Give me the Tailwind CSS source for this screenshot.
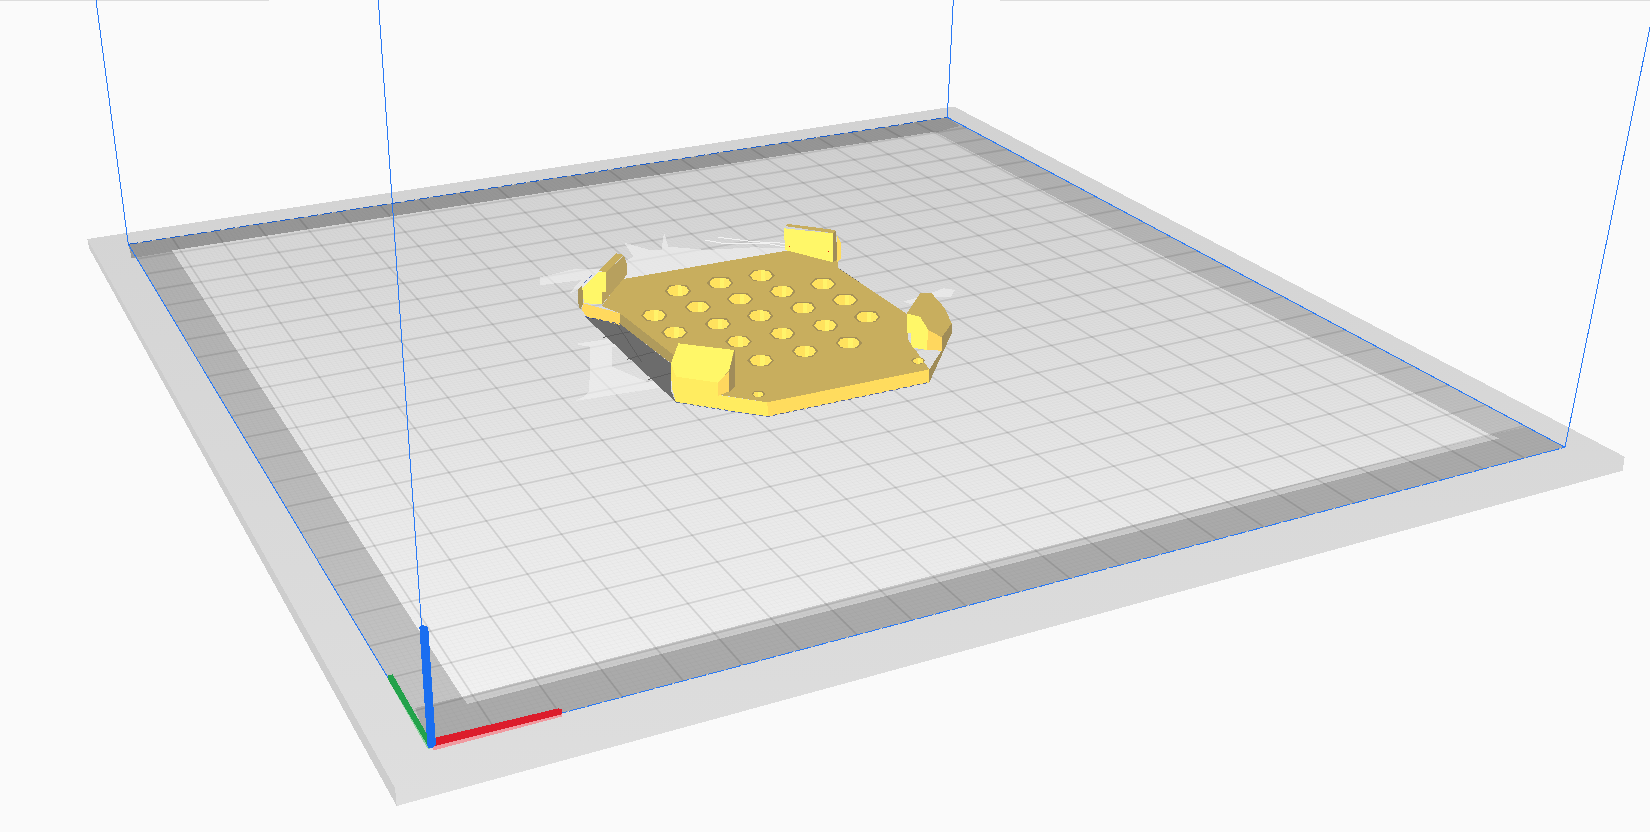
<!DOCTYPE html>
<html lang="en">
<head>
<meta charset="utf-8">
<title>3D build plate view</title>
<script src="https://cdn.jsdelivr.net/npm/@tailwindcss/browser@4"></script>
</head>
<body class="bg-[#fafafa]">
<div class="w-[1650px] h-[832px] overflow-hidden bg-[#fafafa]">
<svg class="block w-[1650px] h-[832px]" viewBox="0 0 1650 832" xmlns="http://www.w3.org/2000/svg">
  <defs>
    <linearGradient id="plat" gradientUnits="userSpaceOnUse" x1="0" y1="107" x2="0" y2="800">
      <stop offset="0" stop-color="#d2d2d2"/><stop offset="1" stop-color="#dedede"/>
    </linearGradient>
    <linearGradient id="light" gradientUnits="userSpaceOnUse" x1="0" y1="130" x2="0" y2="700">
      <stop offset="0" stop-color="#d2d2d2"/><stop offset=".3" stop-color="#dcdcdc"/><stop offset=".65" stop-color="#e9e9e9"/><stop offset="1" stop-color="#f1f1f1"/>
    </linearGradient>
    <linearGradient id="leftband" gradientUnits="userSpaceOnUse" x1="0" y1="250" x2="0" y2="710">
      <stop offset="0" stop-color="#b0b0b0"/><stop offset="1" stop-color="#c4c4c4"/>
    </linearGradient>
    <linearGradient id="rightband" gradientUnits="userSpaceOnUse" x1="0" y1="125" x2="0" y2="430">
      <stop offset="0" stop-color="#b0b0b0"/><stop offset="1" stop-color="#c0c0c0"/>
    </linearGradient>
    <linearGradient id="holefill">
      <stop offset="0" stop-color="#ffe25e"/><stop offset=".48" stop-color="#ffe25e"/>
      <stop offset=".48" stop-color="#fff36a"/><stop offset=".68" stop-color="#fff36a"/>
      <stop offset=".68" stop-color="#ffe964"/><stop offset="1" stop-color="#ffe964"/>
    </linearGradient>
    <g id="hole">
      <polygon points="-40,1 -25,-16 25,-16 40,1 25,17 -25,17" fill="#a69158"/>
      <polygon points="-33,1 -24,-11 -8,-15 8,-15 24,-11 33,1 24,13 8,17 -8,17 -24,13" fill="url(#holefill)"/>
    </g>
    <g id="smallhole">
      <polygon points="-21,0 -12,-9 12,-9 21,0 12,9 -12,9" fill="#a69158"/>
      <ellipse cx="0" cy="1" rx="15" ry="8" fill="url(#holefill)"/>
    </g>
  </defs>

  <!-- top edge -->
  <rect x="0" y="0" width="269" height="1" fill="#dddddd"/>
  <rect x="1000" y="0" width="650" height="1" fill="#dddddd"/>

  <!-- platform -->
  <g shape-rendering="crispEdges">
    <polygon points="87.3,239 947,107.5 955,107 1624.7,456.7 1622.7,470.7 396.7,806 395,788" fill="url(#plat)"/>
    <polygon points="87.3,239 395,788 396.7,806 89,248" fill="#cdcdcd"/>

    <!-- disallowed bands -->
    <polygon points="128.3,244.3 430,748 470,700 172,250" fill="url(#leftband)"/>
    <polygon points="947.3,117.3 1565,447.3 1490,440 935,131.7" fill="url(#rightband)"/>
    <polygon points="128.3,244.3 947.3,117.3 960,126 935,132.5 172,251.5 131.7,258.3" fill="#989898"/>
    <polygon points="415,708 462,696.7 980,563.3 1490.7,435 1526.4,426.7 1565,447.3 430,748" fill="#aaaaaa"/>
    <polygon points="172,250.5 935,131.7 1490.7,435 462,696.7" fill="url(#light)"/>
    <polygon points="462,696.7 980,563.3 1490.7,435 1499.6,438.3 980,571.7 467.5,704" fill="#cbcbcb"/>
  </g>

  <!-- grid, filled by the script below -->
  <g id="grid"></g>

  <!-- build volume outline -->
  <g fill="none" stroke="#2a7af5" stroke-width="1" shape-rendering="crispEdges">
    <line x1="96" y1="0" x2="128.3" y2="244.3"/>
    <line x1="378.3" y1="0" x2="430" y2="748"/>
    <line x1="953.3" y1="0" x2="947.3" y2="117.3"/>
    <line x1="1650" y1="27" x2="1565" y2="447.3"/>
    <line x1="128.3" y1="244.3" x2="430" y2="748"/>
    <line x1="947.3" y1="117.3" x2="1565" y2="447.3"/>
    <line x1="430" y1="748" x2="1565" y2="447.3" stroke-dasharray="16 2"/>
    <line x1="128.3" y1="244.3" x2="947.3" y2="117.3" stroke="#1f5fc8" stroke-dasharray="10 4"/>
  </g>

  <!-- model, in 3x crop coordinates -->
  <g transform="translate(540 200) scale(.33333)" shape-rendering="crispEdges">
    <!-- pale marks on the plate -->
    <g fill="#f2f2f2" fill-opacity=".6">
      <polygon points="0,232 100,208 210,205 280,170 252,128 330,150 365,150 372,96 385,140 500,150 640,142 740,145 740,160 250,240 130,262 85,282 125,240 0,256"/>
      <polygon points="115,430 200,418 290,420 250,440 215,440 215,500 320,545 395,540 395,558 250,580 105,603 130,590 148,575 150,440 115,435"/>
      <polygon points="1090,305 1150,288 1210,265 1245,270 1232,292 1180,292 1110,312"/>
    </g>
    <g fill="none" stroke="#f2f2f2" stroke-width="3">
      <polyline points="495,120 560,132 680,130 740,142"/>
      <polyline points="535,112 640,125 740,130"/>
    </g>

    <!-- underside shadow -->
    <polygon points="135,350 240,372 392,490 392,570 408,607" fill="#6c6c6c"/>
    <polygon points="897,205 1100,342 1100,358 897,217" fill="#666666"/>
    <g stroke="#5c5c5c" stroke-width="3">
      <line x1="190" y1="412" x2="285" y2="392"/>
      <line x1="260" y1="478" x2="345" y2="455"/>
      <line x1="325" y1="538" x2="392" y2="520"/>
      <line x1="225" y1="364" x2="305" y2="485"/>
    </g>

    <!-- plate -->
    <polygon points="185,318 245,238 740,152 895,180 895,205 1105,345 1105,420 1168,508 682,607 540,585 410,530 395,490 240,340" fill="#c8ae5e"/>
    <polygon points="682,607 1168,508 1168,547 684,650" fill="#ffdc5e"/>
    <polygon points="405,530 535,585 682,607 684,650 408,607" fill="#ffec60"/>
    <polygon points="240,340 405,468 393,490 240,372" fill="#b09b5c"/>

    <!-- holes -->
    <use href="#hole" x="414" y="271"/><use href="#hole" x="541" y="248"/><use href="#hole" x="664" y="226"/>
    <use href="#hole" x="849" y="251"/><use href="#hole" x="727" y="273"/><use href="#hole" x="600" y="296"/>
    <use href="#hole" x="474" y="320"/><use href="#hole" x="343" y="345"/><use href="#hole" x="404" y="396"/>
    <use href="#hole" x="535" y="371"/><use href="#hole" x="660" y="346"/><use href="#hole" x="790" y="323"/>
    <use href="#hole" x="915" y="299"/><use href="#hole" x="982" y="350"/><use href="#hole" x="856" y="375"/>
    <use href="#hole" x="727" y="399"/><use href="#hole" x="596" y="424"/><use href="#hole" x="662" y="480"/>
    <use href="#hole" x="795" y="453"/><use href="#hole" x="926" y="428"/>
    <use href="#smallhole" x="655" y="582"/><use href="#smallhole" x="1135" y="482"/>

    <!-- left clip -->
    <polygon points="177,213 230,160 252,165 197,217" fill="#c8ae5e"/>
    <polygon points="197,217 252,168 260,190 260,225 187,312 187,275" fill="#b7a05e"/>
    <polygon points="115,267 127,255 130,310 120,330 115,310" fill="#a8945a"/>
    <polygon points="127,265 175,215 197,217 197,275 187,275 187,312 132,310" fill="#fff768"/>
    <polygon points="130,310 240,340 240,375 140,350 125,330" fill="#ffd95e"/>

    <!-- back clip -->
    <polygon points="735,78 745,72 885,90 890,100 880,100" fill="#c8ae5e"/>
    <polygon points="892,108 903,130 903,175 892,188" fill="#ffdc5e"/>
    <polygon points="732,85 878,100 880,187 735,150" fill="#fff768"/>
    <polygon points="878,100 888,92 892,178 880,187" fill="#a08c5a"/>
    <rect x="746" y="137" width="3" height="3" fill="#e01010"/>
    <rect x="864" y="153" width="3" height="3" fill="#e01010"/>

    <!-- right clip -->
    <polygon points="1100,340 1140,280 1175,280 1215,325 1235,370 1205,412 1165,390 1140,350" fill="#c8ae5e"/>
    <polygon points="1100,340 1140,350 1165,390 1160,450 1115,442 1112,400 1100,400" fill="#fff768"/>
    <polygon points="1165,390 1205,412 1205,452 1160,450" fill="#ffd75e"/>
    <polygon points="1205,412 1235,370 1235,400 1168,547 1168,508 1205,452" fill="#9f8c58"/>

    <!-- front clip -->
    <polygon points="535,548 568,515 566,575 535,587" fill="#ffd75e"/>
    <polygon points="568,510 585,445 585,560 566,578" fill="#a08c5a"/>
    <polygon points="393,490 408,530 408,607 395,560" fill="#ffec60"/>
    <polygon points="408,530 535,548 535,587 408,607" fill="#ffec60"/>
    <polygon points="415,430 582,450 568,510 535,548 408,530 393,490" fill="#fff768"/>

    <!-- dark dashes along the lower edges -->
    <g fill="none" stroke="#0a2a9a" stroke-width="2" stroke-dasharray="12 9">
      <polyline points="135,350 240,372"/>
      <polyline points="408,607 682,650 1168,547"/>
      <polyline points="133,248 162,217"/>
    </g>
  </g>

  <!-- axes, in 3x crop coordinates -->
  <g transform="translate(340 580) scale(.33333)" shape-rendering="crispEdges">
    <polygon points="145,300 262,505 272,508 262,470" fill="#8fd09f"/>
    <polygon points="142,287 158,283 265,470 265,500 145,300" fill="#23a24b"/>
    <polygon points="278,500 665,403 665,410 278,512" fill="#f09aa0"/>
    <polygon points="278,475 655,385 665,388 665,403 278,500" fill="#dc1c2b"/>
    <polygon points="238,140 245,135 258,138 265,145 288,495 278,505 265,505 262,495" fill="#1a6ef0"/>
  </g>
</svg>
</div>
<script>
  (function () {
    var x0 = 430, y0 = 748, x1 = 1565, y1 = 447.3, x2 = 947.3, y2 = 117.3, x3 = 128.3, y3 = 244.3;
    var dx1 = x1 - x2, dx2 = x3 - x2, dx3 = x0 - x1 + x2 - x3;
    var dy1 = y1 - y2, dy2 = y3 - y2, dy3 = y0 - y1 + y2 - y3;
    var den = dx1 * dy2 - dx2 * dy1;
    var g = (dx3 * dy2 - dx2 * dy3) / den, h = (dx1 * dy3 - dx3 * dy1) / den;
    var a = x1 - x0 + g * x1, b = x3 - x0 + h * x3, d = y1 - y0 + g * y1, e = y3 - y0 + h * y3;
    function project(u, v) {
      var w = g * u + h * v + 1;
      return [(a * u + b * v + x0) / w, (d * u + e * v + y0) / w];
    }
    var parent = document.getElementById('grid');
    function line(p, q, op, sw) {
      var el = document.createElementNS('http://www.w3.org/2000/svg', 'line');
      el.setAttribute('x1', p[0]); el.setAttribute('y1', p[1]);
      el.setAttribute('x2', q[0]); el.setAttribute('y2', q[1]);
      el.setAttribute('stroke', '#000');
      el.setAttribute('stroke-opacity', op);
      el.setAttribute('stroke-width', sw);
      parent.appendChild(el);
    }
    var size = 220;
    for (var i = 1; i < size; i++) {
      var t = i / size, major = i % 10 === 0;
      var op = major ? 0.11 : 0.018, sw = major ? 1.7 : 1;
      line(project(t, 0), project(t, 1), op, sw);
      line(project(0, t), project(1, t), op, sw);
    }
  })();
</script>
</body>
</html>
